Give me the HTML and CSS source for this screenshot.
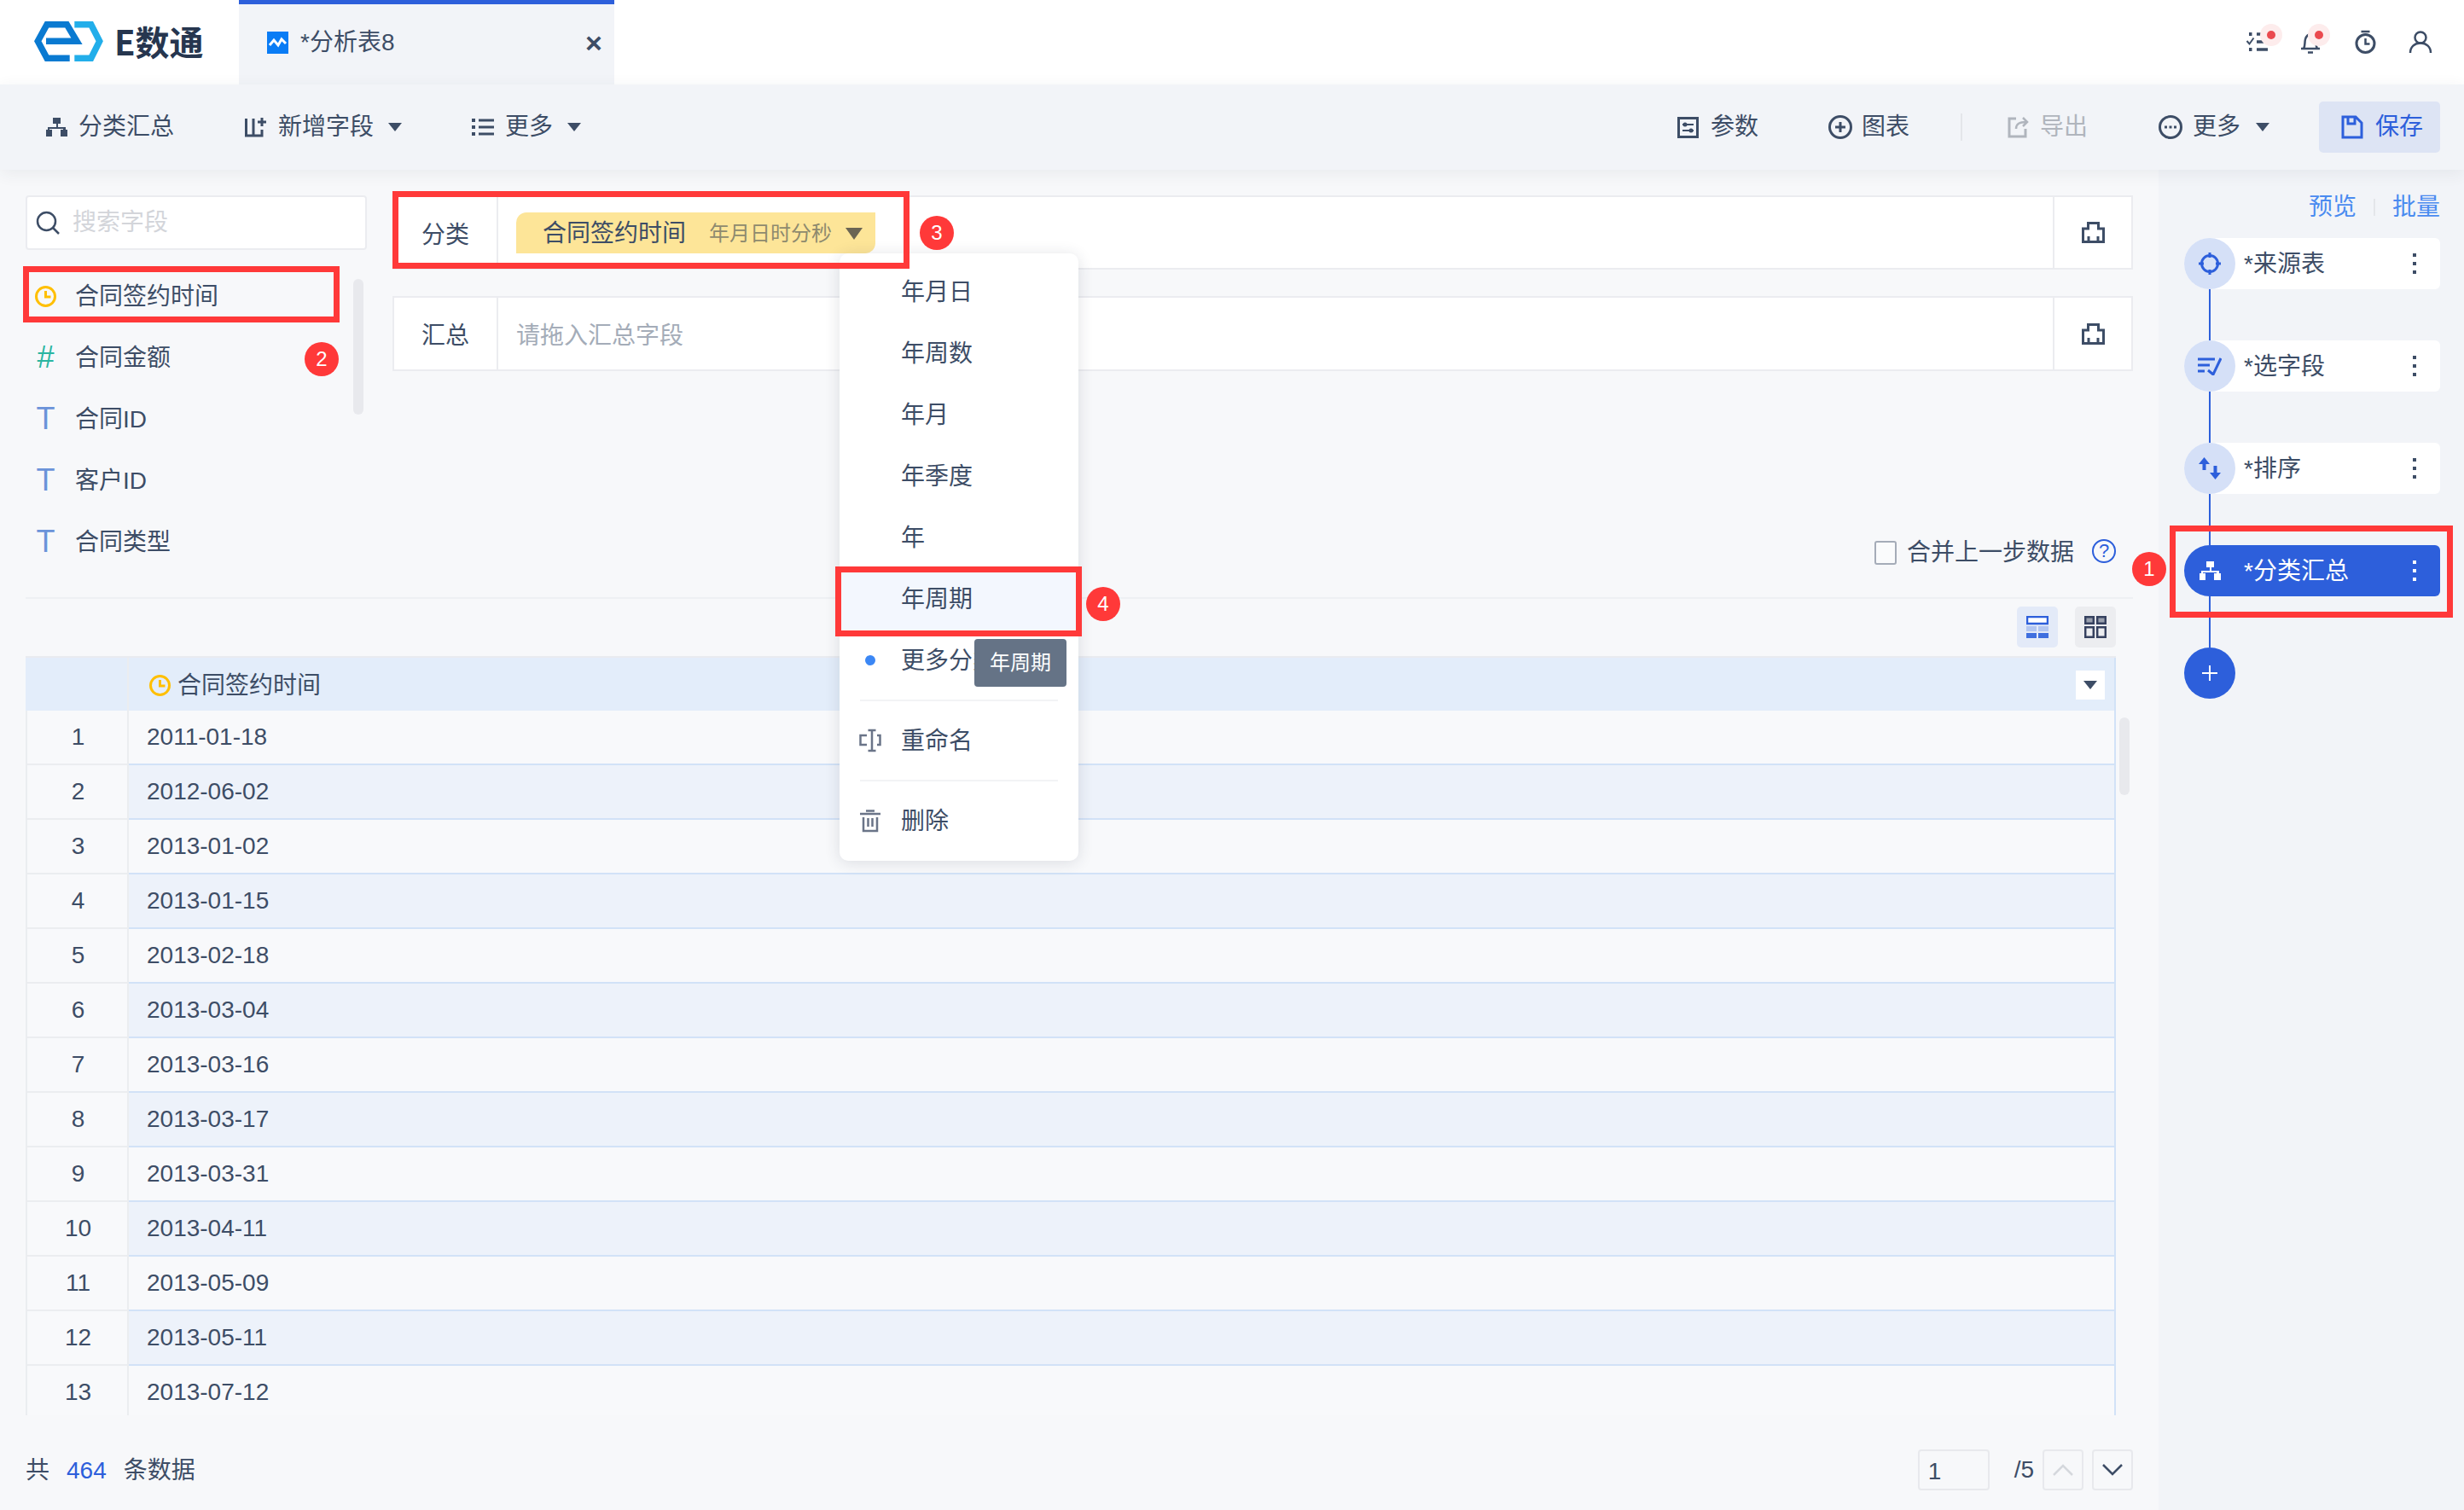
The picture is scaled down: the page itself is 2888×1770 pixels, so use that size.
FILE: index.html
```html
<!DOCTYPE html>
<html lang="zh-CN">
<head>
<meta charset="utf-8">
<title>E数通</title>
<link rel="stylesheet" href="styles.css">
</head>
<body>
<div class="page">
  <header class="topbar">
    <div class="brand">
      <svg class="logo" width="81" height="47" viewBox="0 0 81 47"><path class="logo-a" d="M14 23.300H50L38.300 3.700H15L4.300 23.300 15 43.300H41.700"/><path class="logo-b" d="M47.300 3.700H66.700L76.700 23.300 66.700 43.300H47.300"/></svg>
      <span class="brand-name">E数通</span>
    </div>
    <div class="tab">
      <svg width="25" height="26" viewBox="0 0 25 26"><rect width="25" height="26" fill="#0a7cf5"/><path d="M3 16l5-6 5 6 4-7 5 5" fill="none" stroke="#fff" stroke-width="3"/></svg>
      <span class="tab-title">*分析表8</span>
      <span class="tab-close">×</span>
    </div>
    <div class="top-icons">
      <svg class="top-list" width="34" height="28" viewBox="0 0 34 28"><g class="ic"><path d="M12 5h13M12 14h13M12 23h13" stroke-width="3.500"/><path d="M0.500 13l3 3.500 5-7" stroke-width="2"/></g><path class="dark-fill" d="M3 3h3.500v4H3zM3 21h3.500v4H3z"/><circle cx="29" cy="6" r="13" fill="#fdecec"/><circle cx="29" cy="6" r="5" fill="#ea4a4f"/></svg>
      <svg class="top-bell" width="27" height="28" viewBox="0 0 27 28"><g class="ic"><path d="M2 22h22M5 22c2-3 1-7 2-11 1-4 4-6 6-6s5 2 6 6c1 4 0 8 2 11" stroke-width="2.500"/><path d="M10 26.500h6" stroke-width="2.500"/></g><circle cx="23" cy="6" r="13" fill="#fdecec"/><circle cx="23" cy="6" r="5" fill="#ea4a4f"/></svg>
      <svg class="top-timer" width="25" height="28" viewBox="0 0 25 28"><g class="ic"><circle cx="12.500" cy="16" r="10.500" stroke-width="3"/><path d="M12.500 10v6.500h5M7.500 2h10" stroke-width="2.500"/></g></svg>
      <svg class="top-user" width="27" height="28" viewBox="0 0 27 28"><g class="ic"><circle cx="14" cy="9" r="6.500" stroke-width="2.500"/><path d="M2 27c0-7 5-11.500 12-11.500s12 4.500 12 11.500" stroke-width="2.500"/></g></svg>
    </div>
  </header>

  <nav class="toolbar">
    <div class="tool-group">
      <div class="tool tool-first">
        <svg width="25" height="22" viewBox="0 0 25 22"><path class="dark-fill" d="M8 0h9v7h-3v4h9v3h2v8h-8v-8h3v-1H4v1h3v8H0v-8h2v-3h10V7H8z"/></svg>
        <span>分类汇总</span>
      </div>
      <div class="tool tool-b">
        <svg width="26" height="24" viewBox="0 0 26 24"><g class="ic"><path d="M1.500 2v20h18.500v-7M10 2v20"/><path d="M20 1v10M15 6h10"/></g></svg>
        <span>新增字段</span><i class="caret"></i>
      </div>
      <div class="tool tool-c">
        <svg width="26" height="22" viewBox="0 0 26 22"><g class="ic"><path d="M8 3h18M8 11h18M8 19h18"/></g><path class="dark-fill" d="M0 1h4v4H0zM0 9h4v4H0zM0 17h4v4H0z"/></svg>
        <span>更多</span><i class="caret"></i>
      </div>
    </div>
    <div class="tool-group tool-right">
      <div class="tool tool-param">
        <svg width="25" height="25" viewBox="0 0 25 25"><g class="ic"><rect x="1.500" y="1.500" width="22" height="22"/><path d="M6 9h13M6 16h13" stroke-width="2"/></g><circle class="dark-fill" cx="9" cy="9" r="2.500"/><circle class="dark-fill" cx="16" cy="16" r="2.500"/></svg>
        <span>参数</span>
      </div>
      <div class="tool tool-chart">
        <svg width="28" height="28" viewBox="0 0 28 28"><g class="ic"><circle cx="14" cy="14" r="12.500"/><path d="M14 8v12M8 14h12"/></g></svg>
        <span>图表</span>
      </div>
      <div class="tool-sep"></div>
      <div class="tool tool-export">
        <svg width="27" height="26" viewBox="0 0 27 26"><g class="ic"><path d="M11 3H3v21h19v-9"/><path d="M11 15c0-6 4-8 12-8M19 2l5 5-5 5" stroke-width="2.500"/></g></svg>
        <span>导出</span>
      </div>
      <div class="tool tool-more">
        <svg width="28" height="28" viewBox="0 0 28 28"><g class="ic"><circle cx="14" cy="14" r="12.500"/></g><path class="dark-fill" d="M7 12.500h3v3H7zM12.500 12.500h3v3h-3zM18 12.500h3v3h-3z"/></svg>
        <span>更多</span><i class="caret"></i>
      </div>
      <div class="save-btn">
        <svg width="26" height="28" viewBox="0 0 26 28"><g class="ic"><path d="M2 2h15l7 7v17H2zM8 2v8h8V2"/></g></svg>
        <span>保存</span>
      </div>
    </div>
  </nav>

  <div class="main">
    <section class="content">
      <div class="upper">
        <aside class="fields">
          <div class="search">
            <svg width="28" height="28" viewBox="0 0 28 28"><g class="ic"><circle cx="12.500" cy="12.500" r="10.500" stroke-width="2.500"/><path d="M20 20l7 7" stroke-width="2.500"/></g></svg>
            <span>搜索字段</span>
          </div>
          <ul class="field-list">
            <li class="field"><svg class="clock" width="25" height="25" viewBox="0 0 25 25"><circle cx="12.500" cy="12.500" r="11"/><path d="M12.500 6v7h6"/></svg><span class="field-name">合同签约时间</span></li>
            <li class="field"><span class="f-icon hash">#</span><span class="field-name">合同金额</span></li>
            <li class="field"><span class="f-icon tee">T</span><span class="field-name">合同ID</span></li>
            <li class="field"><span class="f-icon tee">T</span><span class="field-name">客户ID</span></li>
            <li class="field"><span class="f-icon tee">T</span><span class="field-name">合同类型</span></li>
          </ul>
          <div class="field-scroll"></div>
        </aside>
        <div class="zones">
          <div class="zone zone-a">
            <div class="zone-label">分类</div>
            <div class="zone-body">
              <div class="pill">
                <span>合同签约时间</span><span class="pill-sub">年月日时分秒</span><i class="caret pill-caret"></i>
              </div>
            </div>
            <div class="zone-act"><svg width="27" height="25" viewBox="0 0 27 25"><g class="ic"><path d="M7.500 8V1.500h12V8h6v15.500h-24V8zM8 23v-6M19 23v-6"/></g></svg></div>
          </div>
          <div class="zone zone-b">
            <div class="zone-label zone-label-b">汇总</div>
            <div class="zone-body zone-hint">请拖入汇总字段</div>
            <div class="zone-act"><svg width="27" height="25" viewBox="0 0 27 25"><g class="ic"><path d="M7.500 8V1.500h12V8h6v15.500h-24V8zM8 23v-6M19 23v-6"/></g></svg></div>
          </div>
          <div class="merge">
            <span class="check"></span>
            <span>合并上一步数据</span>
            <span class="help">?</span>
          </div>
        </div>
      </div>

      <div class="table-area">
        <div class="view-btns">
          <div class="view-btn view-on">
            <svg width="26" height="26" viewBox="0 0 26 26"><rect x="1" y="1" width="24" height="8" fill="#fff" stroke="#2d5fdb" stroke-width="2.500"/><path d="M0 12h12v6H0zM14 12h12v6H14z" fill="#b3c6f0"/><path d="M0 20h12v6H0zM14 20h12v6H14z" fill="#3f6fdf"/></svg>
          </div>
          <div class="view-btn view-off">
            <svg width="26" height="26" viewBox="0 0 26 26"><g fill="none" stroke="#36415f" stroke-width="2.500"><path fill="#9aa0ae" d="M1.200 1.200h9.600v7.600H1.200zM15.200 1.200h9.600v7.600h-9.600z"/><path d="M1.200 13.200h9.600v11.600H1.200zM15.200 13.200h9.600v11.600h-9.600z"/></g></svg>
          </div>
        </div>
        <div class="table">
          <div class="row head">
            <div class="cell-i"></div>
            <div class="cell-d head-d">
              <svg class="clock" width="25" height="25" viewBox="0 0 25 25"><circle cx="12.500" cy="12.500" r="11"/><path d="M12.500 6v7h6"/></svg>
              <span class="head-name">合同签约时间</span>
              <span class="head-drop"><i class="caret"></i></span>
            </div>
          </div>
          <div class="row"><div class="cell-i">1</div><div class="cell-d">2011-01-18</div></div>
          <div class="row"><div class="cell-i">2</div><div class="cell-d">2012-06-02</div></div>
          <div class="row"><div class="cell-i">3</div><div class="cell-d">2013-01-02</div></div>
          <div class="row"><div class="cell-i">4</div><div class="cell-d">2013-01-15</div></div>
          <div class="row"><div class="cell-i">5</div><div class="cell-d">2013-02-18</div></div>
          <div class="row"><div class="cell-i">6</div><div class="cell-d">2013-03-04</div></div>
          <div class="row"><div class="cell-i">7</div><div class="cell-d">2013-03-16</div></div>
          <div class="row"><div class="cell-i">8</div><div class="cell-d">2013-03-17</div></div>
          <div class="row"><div class="cell-i">9</div><div class="cell-d">2013-03-31</div></div>
          <div class="row"><div class="cell-i">10</div><div class="cell-d">2013-04-11</div></div>
          <div class="row"><div class="cell-i">11</div><div class="cell-d">2013-05-09</div></div>
          <div class="row"><div class="cell-i">12</div><div class="cell-d">2013-05-11</div></div>
          <div class="row"><div class="cell-i">13</div><div class="cell-d">2013-07-12</div></div>
        </div>
        <div class="table-scroll"></div>
      </div>

      <footer class="footer">
        <div class="total"><span>共</span><span class="total-num">464</span><span>条数据</span></div>
        <div class="pager">
          <span class="page-input">1</span>
          <span class="page-count">/5</span>
          <span class="page-btn"><svg width="24" height="14" viewBox="0 0 24 14"><path d="M1 13L12 2l11 11" fill="none" stroke="#d5d8dd" stroke-width="2.500"/></svg></span>
          <span class="page-btn"><svg width="24" height="14" viewBox="0 0 24 14"><path d="M1 1l11 11L23 1" fill="none" stroke="#3d4d66" stroke-width="2.500"/></svg></span>
        </div>
      </footer>
    </section>

    <aside class="sidebar">
      <div class="side-head"><span>预览</span><i class="side-sep"></i><span>批量</span></div>
      <div class="node">
        <span class="node-dot"><svg width="28" height="28" viewBox="0 0 28 28"><g class="ic"><circle cx="14" cy="14" r="9.500"/><path d="M14 1v6M14 21v6M1 14h6M21 14h6"/></g></svg></span>
        <span class="node-name">*来源表</span>
        <svg class="kebab" width="6" height="26" viewBox="0 0 6 26"><path d="M1 1h4v4H1zM1 11h4v4H1zM1 21h4v4H1z"/></svg>
      </div>
      <i class="link"></i>
      <div class="node">
        <span class="node-dot"><svg width="28" height="22" viewBox="0 0 28 22"><g class="ic"><path d="M0 3h20M0 10h14M0 17h8"/><path d="M12 16l6 5 9-19" stroke-width="3"/></g></svg></span>
        <span class="node-name">*选字段</span>
        <svg class="kebab" width="6" height="26" viewBox="0 0 6 26"><path d="M1 1h4v4H1zM1 11h4v4H1zM1 21h4v4H1z"/></svg>
      </div>
      <i class="link"></i>
      <div class="node">
        <span class="node-dot"><svg width="26" height="26" viewBox="0 0 26 26"><path class="blue-fill" d="M6.500 0L13 8H8.500v7h-4V8H0zM17.500 10h4v8H26l-6.500 8L13 18h4.500z"/></svg></span>
        <span class="node-name">*排序</span>
        <svg class="kebab" width="6" height="26" viewBox="0 0 6 26"><path d="M1 1h4v4H1zM1 11h4v4H1zM1 21h4v4H1z"/></svg>
      </div>
      <i class="link"></i>
      <div class="node node-on">
        <span class="node-dot"><svg width="25" height="22" viewBox="0 0 25 22"><path fill="#fff" d="M8 0h9v7h-3v4h9v3h2v8h-8v-8h3v-1H4v1h3v8H0v-8h2v-3h10V7H8z"/></svg></span>
        <span class="node-name">*分类汇总</span>
        <svg class="kebab" width="6" height="26" viewBox="0 0 6 26"><path d="M1 1h4v4H1zM1 11h4v4H1zM1 21h4v4H1z"/></svg>
      </div>
      <i class="link"></i>
      <div class="add-node"><svg width="20" height="20" viewBox="0 0 20 20"><path d="M10 1v18M1 10h18" stroke="#fff" stroke-width="2"/></svg></div>
    </aside>
  </div>

  <div class="menu">
    <div class="menu-item"><span></span><span class="menu-text">年月日</span></div>
    <div class="menu-item"><span></span><span class="menu-text">年周数</span></div>
    <div class="menu-item"><span></span><span class="menu-text">年月</span></div>
    <div class="menu-item"><span></span><span class="menu-text">年季度</span></div>
    <div class="menu-item"><span></span><span class="menu-text">年</span></div>
    <div class="menu-item menu-hover"><span></span><span class="menu-text">年周期</span></div>
    <div class="menu-item"><span class="menu-dot"></span><span class="menu-text">更多分类</span></div>
    <div class="menu-line"></div>
    <div class="menu-item"><span class="menu-ic"><svg width="26" height="28" viewBox="0 0 26 28"><g fill="none" stroke="#6a7488" stroke-width="2.500"><path d="M9 8H1.500v11H9M21 8h3.500v11H21M15 2v24M10.500 2h9M10.500 26h9"/></g></svg></span><span class="menu-text">重命名</span></div>
    <div class="menu-line"></div>
    <div class="menu-item"><span class="menu-ic"><svg width="24" height="27" viewBox="0 0 24 27"><g fill="none" stroke="#6a7488" stroke-width="2.500"><path d="M7 1.500h10M0 5h24M4 9v16h16V9M9.500 10v10M14.500 10v10"/></g></svg></span><span class="menu-text">删除</span></div>
    <div class="tooltip">年周期</div>
  </div>

  <div class="mark mark-field"></div>
  <div class="mark mark-zone"></div>
  <div class="mark mark-item"></div>
  <div class="mark mark-node"></div>
  <span class="badge badge-1">1</span>
  <span class="badge badge-2">2</span>
  <span class="badge badge-3">3</span>
  <span class="badge badge-4">4</span>
</div>
</body>
</html>
```
FILE: styles.css
```css
* { box-sizing: border-box; }
html, body { margin: 0; padding: 0; }
body {
  font-family: "Liberation Sans", "Noto Sans CJK SC", sans-serif;
  font-size: 28px;
  line-height: 36px;
  color: #3d4d66;
  background: #f7f8fa;
}
ul { list-style: none; margin: 0; padding: 0; }
i { display: block; font-style: normal; }
svg { display: block; flex: none; }
.ic { fill: none; stroke: currentColor; stroke-width: 3; }
.dark-fill { fill: #3d4d66; }
.blue-fill { fill: #2d5fdb; }

.page {
  position: relative;
  width: 2888px;
  height: 1770px;
  overflow: hidden;
  display: flex;
  flex-direction: column;
}

/* top bar */
.topbar { height: 99px; background: #fff; display: flex; flex: none; }
.brand { width: 280px; padding: 25px 0 0 40px; display: flex; align-items: flex-start; gap: 13px; }
.logo-a { fill: none; stroke: #0a7ad1; stroke-width: 7.500; }
.logo-b { fill: none; stroke: #22aeea; stroke-width: 7.500; }
.brand-name {
  font-family: "Noto Sans CJK SC", sans-serif;
  font-weight: 700;
  font-size: 40px;
  line-height: 46px;
  color: #26364f;
}
.tab {
  width: 440px;
  background: #f2f4f8;
  border-top: 5px solid #2d5fdb;
  display: flex;
  align-items: center;
  padding: 0 0 5px 33px;
  gap: 14px;
}
.tab-title { flex: 1; }
.tab-close { width: 48px; font-size: 34px; font-weight: 700; text-align: center; color: #3d4d66; }
.top-icons {
  margin-left: auto;
  padding-right: 38px;
  display: flex;
  align-items: center;
  color: #3d4d66;
  padding-bottom: 1px;
}
.top-icons svg { overflow: visible; }
.top-bell { margin-left: 28px; }
.top-timer { margin-left: 38px; }
.top-user { margin-left: 38px; }

/* toolbar */
.toolbar {
  height: 100px;
  flex: none;
  background: #f2f4f8;
  box-shadow: 0 4px 18px rgba(40, 50, 70, .07);
  position: relative;
  z-index: 1;
  display: flex;
  align-items: center;
}
.tool-group { display: flex; align-items: center; }
.tool-right { margin-left: auto; padding-right: 28px; }
.tool { display: flex; align-items: center; gap: 13px; }
.tool-first { margin-left: 54px; }
.tool-b { margin-left: 83px; }
.tool-c { margin-left: 82px; }
.tool-param { gap: 14px; }
.tool-chart { margin-left: 82px; gap: 11px; }
.tool-sep { width: 2px; height: 32px; background: #e4e6ea; margin-left: 60px; }
.tool-export { margin-left: 52px; gap: 12px; color: #b0b5bd; }
.tool-more { margin-left: 83px; gap: 12px; }
.tool-more .caret { margin-left: 6px; }
.caret {
  width: 0;
  height: 0;
  border-left: 8px solid transparent;
  border-right: 8px solid transparent;
  border-top: 10px solid #3d4d66;
  margin-left: 4px;
}
.save-btn {
  margin-left: 58px;
  width: 142px;
  height: 60px;
  background: #dde4f4;
  border-radius: 5px;
  color: #2d5fdb;
  display: flex;
  align-items: center;
  gap: 14px;
  padding-left: 26px;
}

/* main */
.main { flex: 1; display: flex; min-height: 0; }
.content { width: 2530px; flex: none; padding: 0 30px; background: #f7f8fa; }
.upper { height: 503px; display: flex; border-bottom: 2px solid #eef0f3; gap: 30px; }

.fields { width: 400px; flex: none; padding-top: 30px; position: relative; }
.search {
  width: 400px;
  height: 64px;
  background: #fff;
  border: 2px solid #ebecf0;
  border-radius: 4px;
  display: flex;
  align-items: center;
  gap: 15px;
  padding-left: 10px;
  color: #d3d5da;
}
.search svg { color: #3d4d66; }
.field-list { padding-top: 18px; }
.field { height: 72px; display: flex; align-items: center; gap: 22px; padding-left: 11px; }
.field-name { padding-top: 2px; }
.clock { fill: none; stroke: #ffbf00; stroke-width: 3; }
.f-icon { width: 25px; text-align: center; font-size: 36px; }
.hash { color: #2ab5a0; }
.tee { color: #6b93d9; }
.field-scroll {
  position: absolute;
  left: 384px;
  top: 128px;
  width: 12px;
  height: 159px;
  background: #e8e9ed;
  border-radius: 6px;
}

.zones { flex: 1; padding-top: 30px; display: flex; flex-direction: column; }
.zone { display: flex; background: #fff; border: 2px solid #ebecf0; }
.zone-a { height: 87px; }
.zone-b { height: 88px; margin-top: 31px; }
.zone-label {
  width: 122px;
  flex: none;
  border-right: 2px solid #ebecf0;
  display: flex;
  align-items: center;
  justify-content: center;
  padding-top: 7px;
}
.zone-label-b { padding-top: 5px; }
.zone-body { flex: 1; display: flex; align-items: flex-start; padding: 18px 0 0 21px; }
.zone-hint { align-items: center; padding-top: 6px; color: #a4acb8; }
.zone-act {
  width: 92px;
  flex: none;
  border-left: 2px solid #ebecf0;
  display: flex;
  align-items: center;
  justify-content: center;
}
.pill {
  width: 421px;
  height: 48px;
  background: #fde598;
  border-radius: 12px 0 12px 0;
  display: flex;
  align-items: center;
  padding: 1px 0 0 31px;
}
.pill-sub { font-size: 24px; color: #8e8a6e; margin-left: 27px; }
.pill-caret { margin-left: 16px; border-left-width: 10px; border-right-width: 10px; border-top: 14px solid #6b6553; }
.merge {
  margin-top: auto;
  margin-bottom: 34px;
  display: flex;
  align-items: center;
  justify-content: flex-end;
  padding-right: 20px;
}
.check {
  width: 26px;
  height: 28px;
  border: 2px solid #a5acb8;
  border-radius: 3px;
  margin-right: 12px;
  background: #fafbfc;
}
.help {
  width: 28px;
  height: 28px;
  margin-left: 21px;
  border: 2px solid #2d5fdb;
  border-radius: 50%;
  color: #2d5fdb;
  font-size: 22px;
  line-height: 24px;
  text-align: center;
  transform: translateY(-2px);
}

/* table */
.table-area { position: relative; width: 2450px; }
.view-btns { height: 67px; padding-top: 9px; display: flex; justify-content: flex-end; gap: 20px; }
.view-btn { width: 48px; height: 48px; border-radius: 5px; display: flex; align-items: center; justify-content: center; }
.view-on { background: #e3eaf8; }
.view-off { background: #ecedf0; }
.table { height: 890px; overflow: hidden; }
.row { display: grid; grid-template-columns: 121px 1fr; height: 64px; }
.cell-i {
  border-left: 2px solid #ebedf0;
  border-right: 2px solid #ebedf0;
  border-bottom: 2px solid #ebedf0;
  padding-left: 2px;
  text-align: center;
  line-height: 62px;
  background: #f8f9fb;
}
.cell-d {
  border-right: 2px solid #d2e2f7;
  border-bottom: 2px solid #d2e2f7;
  padding-left: 21px;
  line-height: 62px;
  background: #f8f9fb;
}
.row:nth-child(odd) .cell-d { background: #edf2fa; }
.row.head { border-top: 2px solid #e9ebf0; }
.row.head .cell-i { background: #e3edfa; border-left: 0; border-bottom-color: #d0d4da; }
.row.head .cell-d { background: #e3edfa; display: flex; align-items: center; padding-left: 24px; gap: 8px; }
.head-name { padding-top: 2px; }
.head-drop {
  margin-left: auto;
  margin-right: 11px;
  width: 34px;
  height: 34px;
  background: #fff;
  display: flex;
  align-items: center;
  justify-content: center;
}
.head-drop .caret { margin: 0; }
.table-scroll {
  position: absolute;
  left: 2454px;
  top: 139px;
  width: 12px;
  height: 91px;
  background: #e8e9ed;
  border-radius: 6px;
}

/* footer */
.footer { margin-top: 40px; width: 2470px; height: 48px; display: flex; justify-content: space-between; align-items: center; }
.total { display: flex; gap: 20px; padding-top: 2px; }
.total-num { color: #2d5fdb; }
.pager { display: flex; align-items: center; }
.page-input {
  width: 84px;
  height: 48px;
  border: 2px solid #e8e9ed;
  border-radius: 4px;
  padding-left: 10px;
  line-height: 48px;
}
.page-count { margin-left: 29px; margin-right: 10px; }
.page-btn {
  width: 48px;
  height: 48px;
  border: 2px solid #e8e9ed;
  border-radius: 4px;
  margin-left: 10px;
  display: flex;
  align-items: center;
  justify-content: center;
}
.page-count + .page-btn { margin-left: 0; }

/* sidebar */
.sidebar { flex: 1; background: #f2f4f8; padding: 24px 28px 0 30px; display: flex; flex-direction: column; }
.side-head { height: 36px; margin-bottom: 20px; padding-top: 4px; display: flex; justify-content: flex-end; align-items: center; color: #4a8bf0; }
.side-sep { width: 2px; height: 20px; background: #e4e6ea; margin: 0 20px; }
.node { height: 60px; flex: none; background: #fff; border-radius: 30px 6px 6px 30px; display: flex; align-items: center; }
.node-dot {
  width: 60px;
  height: 60px;
  flex: none;
  background: #d5e0f7;
  border-radius: 50%;
  color: #2d5fdb;
  display: flex;
  align-items: center;
  justify-content: center;
}
.node-name { margin-left: 10px; padding-top: 2px; }
.kebab { margin-left: auto; margin-right: 27px; fill: #3d4d66; }
.node-on { background: #2d5fdb; color: #fff; }
.node-on .node-dot { background: transparent; }
.node-on .kebab { fill: #fff; }
.link { width: 2px; height: 60px; flex: none; margin-left: 29px; background: #2d5fdb; }
.add-node {
  width: 60px;
  height: 60px;
  background: #2d5fdb;
  border-radius: 50%;
  display: flex;
  align-items: center;
  justify-content: center;
}

/* dropdown menu */
.menu {
  position: absolute;
  left: 984px;
  top: 297px;
  width: 280px;
  height: 712px;
  padding: 9px 0 10px;
  background: #fff;
  border-radius: 10px;
  box-shadow: 0 2px 18px rgba(40, 50, 70, .14);
  z-index: 2;
}
.menu-item { height: 72px; display: grid; grid-template-columns: 72px 1fr; align-items: center; }
.menu-text { padding-top: 2px; }
.menu-hover { background: #f3f7fe; }
.menu-line { height: 2px; margin: 10px 24px; background: #f2f3f5; }
.menu-dot { width: 12px; height: 12px; margin-left: 30px; background: #3b87f5; border-radius: 50%; }
.menu-ic { display: flex; justify-content: center; }
.tooltip {
  position: absolute;
  left: 158px;
  top: 452px;
  width: 108px;
  height: 56px;
  background: #657386;
  border-radius: 4px;
  color: #fff;
  font-size: 24px;
  line-height: 56px;
  text-align: center;
}

/* annotations */
.mark { position: absolute; border: 7px solid #ff3939; z-index: 3; }
.mark-field { left: 27px; top: 312px; width: 371px; height: 66px; }
.mark-zone { left: 460px; top: 224px; width: 606px; height: 91px; }
.mark-item { left: 979px; top: 664px; width: 289px; height: 82px; }
.mark-node { left: 2543px; top: 616px; width: 332px; height: 108px; }
.badge {
  position: absolute;
  width: 40px;
  height: 40px;
  border-radius: 50%;
  background: #ff3939;
  color: #fff;
  font-size: 24px;
  line-height: 40px;
  text-align: center;
  z-index: 4;
}
.badge-1 { left: 2499px; top: 647px; }
.badge-2 { left: 357px; top: 401px; }
.badge-3 { left: 1078px; top: 253px; }
.badge-4 { left: 1273px; top: 688px; }
```
